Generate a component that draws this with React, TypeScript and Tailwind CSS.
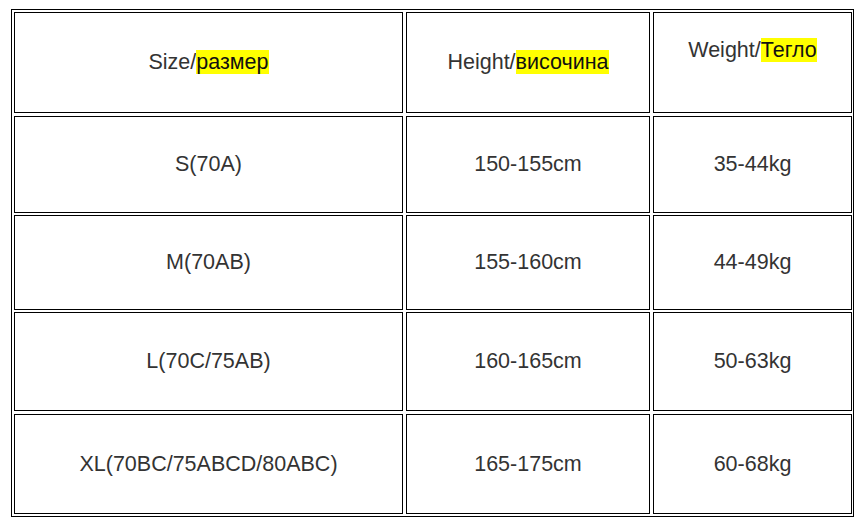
import React from "react";

type Row = { h: string; mt: string; cells: React.ReactNode[] };

const Hl = ({ children }: { children: React.ReactNode }) => (
  <span className="bg-[#ffff00] text-[#111]">{children}</span>
);

const rows: Row[] = [
  {
    h: "h-[101px]",
    mt: "",
    cells: [
      <span>
        Size/<Hl>размер</Hl>
      </span>,
      <span>
        Height/<Hl>височина</Hl>
      </span>,
      <span className="text-center">
        Weight/<Hl>Тегло</Hl>
        <br />
        &nbsp;
      </span>,
    ],
  },
  { h: "h-[97px]", mt: "mt-[3px]", cells: ["S(70A)", "150-155cm", "35-44kg"] },
  { h: "h-[95px]", mt: "mt-[2px]", cells: ["M(70AB)", "155-160cm", "44-49kg"] },
  { h: "h-[99px]", mt: "mt-[2px]", cells: ["L(70C/75AB)", "160-165cm", "50-63kg"] },
  {
    h: "h-[100px]",
    mt: "mt-[3px]",
    cells: ["XL(70BC/75ABCD/80ABC)", "165-175cm", "60-68kg"],
  },
];

const widths = ["w-[389px]", "w-[244px]", "w-[199px]"];

export default function App() {
  return (
    <div
      className="w-[868px] h-[528px] bg-white pl-[11px] pt-[9px] text-[#333] text-[21.5px] leading-[25px]"
      style={{ fontFamily: '"Liberation Sans", Arial, sans-serif' }}
    >
      <div className="w-[843px] border border-black pl-[2px] pt-[2px] pr-[1px] pb-[2px]">
        {rows.map((r, i) => (
          <div key={i} className={`flex gap-[3px] ${r.h} ${r.mt}`}>
            {r.cells.map((c, j) => (
              <div
                key={j}
                className={`${widths[j]} shrink-0 border border-black flex items-center justify-center`}
              >
                {c}
              </div>
            ))}
          </div>
        ))}
      </div>
    </div>
  );
}
